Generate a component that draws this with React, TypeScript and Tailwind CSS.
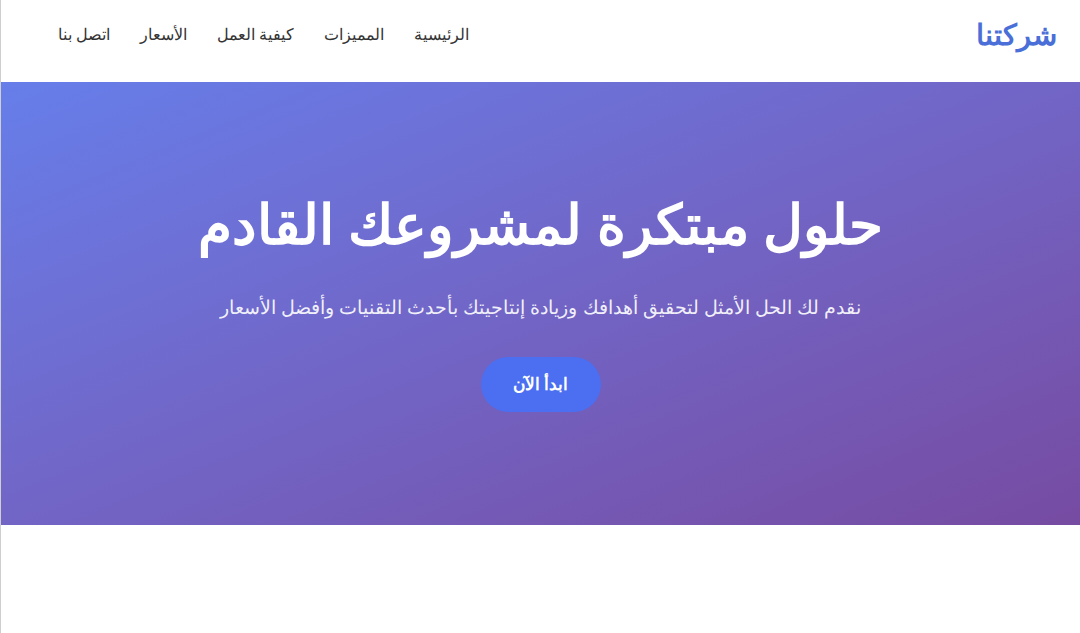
export default function App() {
  const links = ['الرئيسية', 'المميزات', 'كيفية العمل', 'الأسعار', 'اتصل بنا'];

  return (
    <div
      dir="rtl"
      className="min-h-[633px] bg-white border-l border-[#cfcfcf]"
      style={{ fontFamily: '"Noto Sans", sans-serif' }}
    >
      {/* Header */}
      <header className="h-[82px] pb-[15px] pr-[23px] pl-[57px] flex items-center justify-between bg-white">
        <div className="text-[29px] font-bold text-[#4a6fd8]">شركتنا</div>
        <nav className="flex items-center gap-[30px] text-[16px] text-[#333]">
          {links.map((l) => (
            <a key={l} href="#" className="hover:text-[#4a6fd8]">
              {l}
            </a>
          ))}
        </nav>
      </header>

      {/* Hero */}
      <section className="h-[443px] pt-[108px] flex flex-col items-center text-center text-white bg-gradient-to-br from-[#667eea] to-[#764ba2]">
        <h1 className="text-[55px] font-semibold leading-[1.2]">حلول مبتكرة لمشروعك القادم</h1>
        <p className="mt-[37px] text-[19.3px] leading-[28.5px] opacity-90">
          نقدم لك الحل الأمثل لتحقيق أهدافك وزيادة إنتاجيتك بأحدث التقنيات وأفضل الأسعار
        </p>
        <button className="mt-[35px] w-[120px] h-[55px] rounded-full bg-[#4b6ff0] text-white text-[17px] font-semibold">
          ابدأ الآن
        </button>
      </section>
    </div>
  );
}
